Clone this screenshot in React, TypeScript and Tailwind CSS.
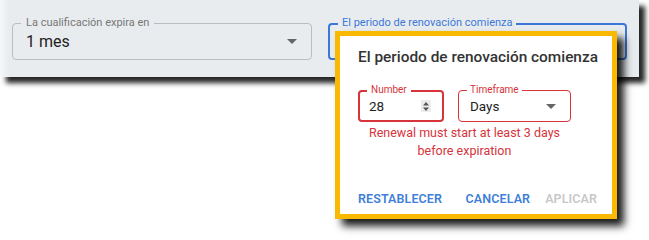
import React from "react";

const Arrow = ({ color = "#666" }: { color?: string }) => (
  <svg width="10" height="5" viewBox="0 0 10 5" className="block">
    <polygon points="0,0 10,0 5,5" fill={color} />
  </svg>
);

export default function App() {
  return (
    <div
      className="relative w-[649px] h-[240px] bg-white overflow-hidden"
      style={{ fontFamily: "Roboto, 'Liberation Sans', sans-serif" }}
    >
      {/* background panel */}
      <div className="w-[639px] h-[77px] bg-[linear-gradient(to_right,#f6f7f8,#e9ecef_9px)] shadow-[6px_6px_5px_rgba(0,0,0,0.85)] flex gap-[16px] pl-[12px] pt-[23px]">
        <div className="relative w-[300px] h-[37px] border border-[#b9bdc1] rounded-[4px] flex items-center justify-between pl-[13px] pr-[14px]">
          <span className="absolute left-[8px] top-[-9px] px-[5px] bg-[#e9ecef] text-[11px] leading-[16px] text-[#777]">
            La cualificación expira en
          </span>
          <span className="text-[16px] leading-[20px] text-[#222] pt-[1px]">1 mes</span>
          <Arrow />
        </div>
        <div className="relative w-[299px] h-[37px] border-2 border-[#3b78d8] rounded-[4px]">
          <span className="absolute left-[8px] top-[-10px] px-[4px] bg-[#e9ecef] text-[11px] leading-[16px] text-[#3b78d8]">
            El periodo de renovación comienza
          </span>
        </div>
      </div>

      {/* popup */}
      <div className="absolute left-[335px] top-[31px] w-[282px] h-[188px] border-[5px] border-[#f9b900] bg-white shadow-[7px_7px_8px_rgba(0,0,0,0.9)] flex flex-col pl-[18px] pr-[15px]">
        <div className="pt-[11px] text-[15.4px] leading-[20px] font-medium text-[#333] whitespace-nowrap">
          El periodo de renovación comienza
        </div>
        <div className="mt-[23px] flex gap-[14px]">
          <div className="relative w-[86px] h-[32px] border-2 border-[#d6333b] rounded-[4px] flex items-center justify-between pl-[9px] pr-[11px]">
            <span className="absolute left-[7px] top-[-9px] px-[4px] bg-white text-[10px] leading-[14px] text-[#d6333b]">
              Number
            </span>
            <span className="text-[13.5px] leading-[18px] text-[#222]">28</span>
            <span className="w-[10px] h-[12px] bg-[#ececec] flex items-center justify-center">
              <svg width="6" height="9" viewBox="0 0 6 9" className="block">
                <polygon points="0,3.5 6,3.5 3,0" fill="#555" />
                <polygon points="0,5.5 6,5.5 3,9" fill="#555" />
              </svg>
            </span>
          </div>
          <div className="relative w-[113px] h-[32px] border border-[#d6333b] rounded-[4px] flex items-center justify-between pl-[11px] pr-[14px]">
            <span className="absolute left-[8px] top-[-8px] px-[3px] bg-white text-[10px] leading-[14px] text-[#d6333b]">
              Timeframe
            </span>
            <span className="text-[13.5px] leading-[18px] text-[#222]">Days</span>
            <Arrow />
          </div>
        </div>
        <div className="w-[213px] mt-[2px] text-center text-[12.5px] leading-[17.5px] text-[#d6333b]">
          Renewal must start at least 3 days before expiration
        </div>
        <div className="mt-[30px] flex items-center justify-between text-[12.5px] leading-[20px] font-semibold tracking-[0.1px]">
          <span className="text-[#3f7fd8]">RESTABLECER</span>
          <div className="flex gap-[15px]">
            <span className="text-[#3f7fd8]">CANCELAR</span>
            <span className="text-[#c8c8c8]">APLICAR</span>
          </div>
        </div>
      </div>
    </div>
  );
}
